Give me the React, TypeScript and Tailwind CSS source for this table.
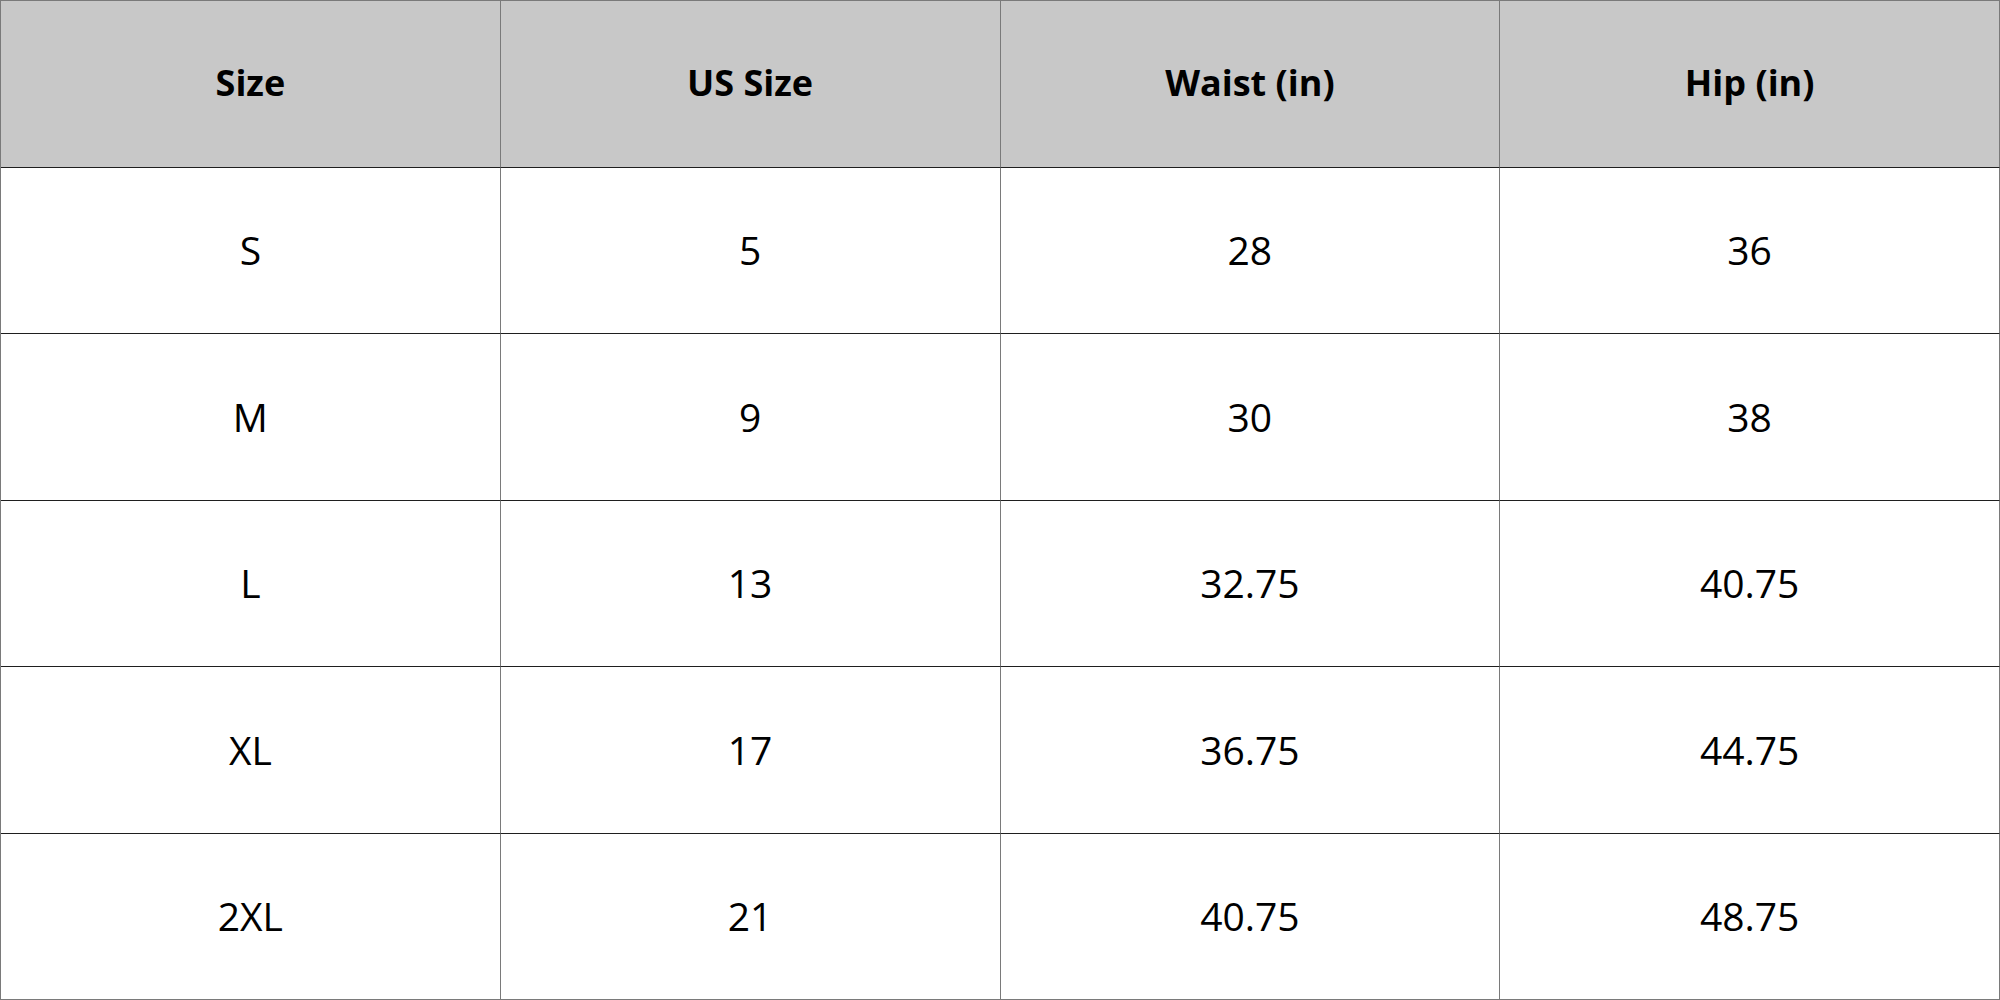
import React from "react"

const headers = ["Size", "US Size", "Waist (in)", "Hip (in)"]

const rows = [
  ["S", "5", "28", "36"],
  ["M", "9", "30", "38"],
  ["L", "13", "32.75", "40.75"],
  ["XL", "17", "36.75", "44.75"],
  ["2XL", "21", "40.75", "48.75"],
]

export default function App() {
  return (
    <div className="w-[2000px] h-[1000px] bg-white font-['Open_Sans',sans-serif] text-black">
      <div className="grid h-full grid-cols-4 grid-rows-6 border-l border-t border-[#7a7a7a]">
        {headers.map((h) => (
          <div
            key={h}
            className="flex items-center justify-center border-r border-b border-r-[#7a7a7a] border-b-[#1f1f1f] bg-[#c8c8c8] pb-[2px] text-[36px] font-bold"
          >
            {h}
          </div>
        ))}
        {rows.map((row, i) =>
          row.map((cell, j) => (
            <div
              key={`${i}-${j}`}
              className={`flex items-center justify-center border-r border-b border-r-[#7a7a7a] text-[39px] ${
                i === rows.length - 1 ? "border-b-[#7a7a7a]" : "border-b-[#1f1f1f]"
              }`}
            >
              {cell}
            </div>
          ))
        )}
      </div>
    </div>
  )
}
